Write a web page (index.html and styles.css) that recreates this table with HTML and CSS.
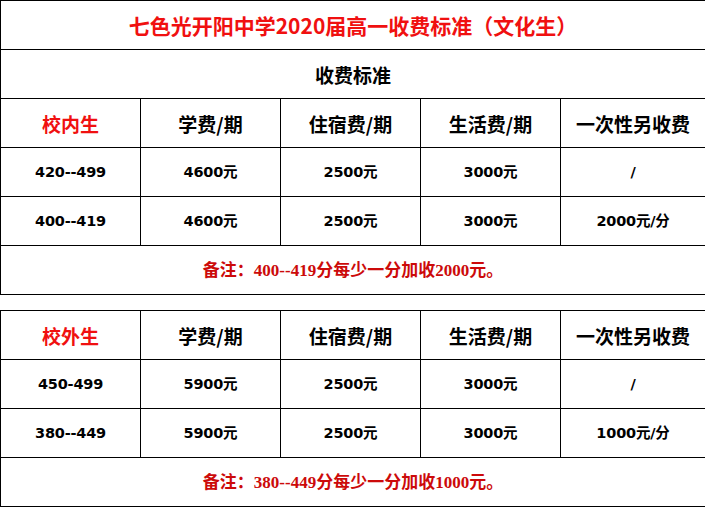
FILE: index.html
```html
<!DOCTYPE html>
<html lang="zh-CN">
<head>
<meta charset="utf-8">
<title>七色光开阳中学2020届高一收费标准（文化生）</title>
<link rel="stylesheet" href="styles.css">
</head>
<body>
<div class="page">
  <table class="fee">
    <colgroup><col class="c"><col class="c"><col class="c"><col class="c"><col class="c-last"></colgroup>
    <tr><td colspan="5" class="title">七色光开阳中学2020届高一收费标准（文化生）</td></tr>
    <tr><td colspan="5" class="sub">收费标准</td></tr>
    <tr class="head">
      <td class="red">校内生</td><td>学费/期</td><td>住宿费/期</td><td>生活费/期</td><td>一次性另收费</td>
    </tr>
    <tr class="data">
      <td>420--499</td><td>4600元</td><td>2500元</td><td>3000元</td><td>/</td>
    </tr>
    <tr class="data">
      <td>400--419</td><td>4600元</td><td>2500元</td><td>3000元</td><td>2000元/分</td>
    </tr>
    <tr><td colspan="5" class="note">备注：400--419分每少一分加收2000元。</td></tr>
  </table>

  <table class="fee second">
    <colgroup><col class="c"><col class="c"><col class="c"><col class="c"><col class="c-last"></colgroup>
    <tr class="head">
      <td class="red">校外生</td><td>学费/期</td><td>住宿费/期</td><td>生活费/期</td><td>一次性另收费</td>
    </tr>
    <tr class="data">
      <td>450-499</td><td>5900元</td><td>2500元</td><td>3000元</td><td>/</td>
    </tr>
    <tr class="data">
      <td>380--449</td><td>5900元</td><td>2500元</td><td>3000元</td><td>1000元/分</td>
    </tr>
    <tr><td colspan="5" class="note">备注：380--449分每少一分加收1000元。</td></tr>
  </table>
</div>
</body>
</html>
```

FILE: styles.css
```css
html, body {
  margin: 0;
  padding: 0;
  background: #fff;
}

.page {
  width: 705px;
  display: flex;
  flex-direction: column;
  gap: 15px;
}

.fee {
  width: 705px;
  border-collapse: collapse;
  table-layout: fixed;
  font-family: "Noto Sans CJK SC", sans-serif;
  color: #000;
}

.fee col.c { width: 140px; }
.fee col.c-last { width: 145px; }

.fee td {
  border: 1px solid #000;
  height: 48px;
  padding: 0;
  text-align: center;
  vertical-align: middle;
  font-weight: 700;
  line-height: 1;
  white-space: nowrap;
}

.title {
  color: #f01010;
  font-size: 21px;
  padding-left: 0;
}

.sub {
  font-size: 19px;
}

.head td {
  font-size: 19px;
}

.head td.red {
  color: #f01010;
}

.data td {
  font-family: "DejaVu Sans", "Noto Sans CJK SC", sans-serif;
  font-size: 14.5px;
  letter-spacing: -0.2px;
}

.note {
  font-family: "Liberation Serif", "Noto Sans CJK SC", serif;
  color: #cc0a0a;
  font-size: 17px;
}
```
